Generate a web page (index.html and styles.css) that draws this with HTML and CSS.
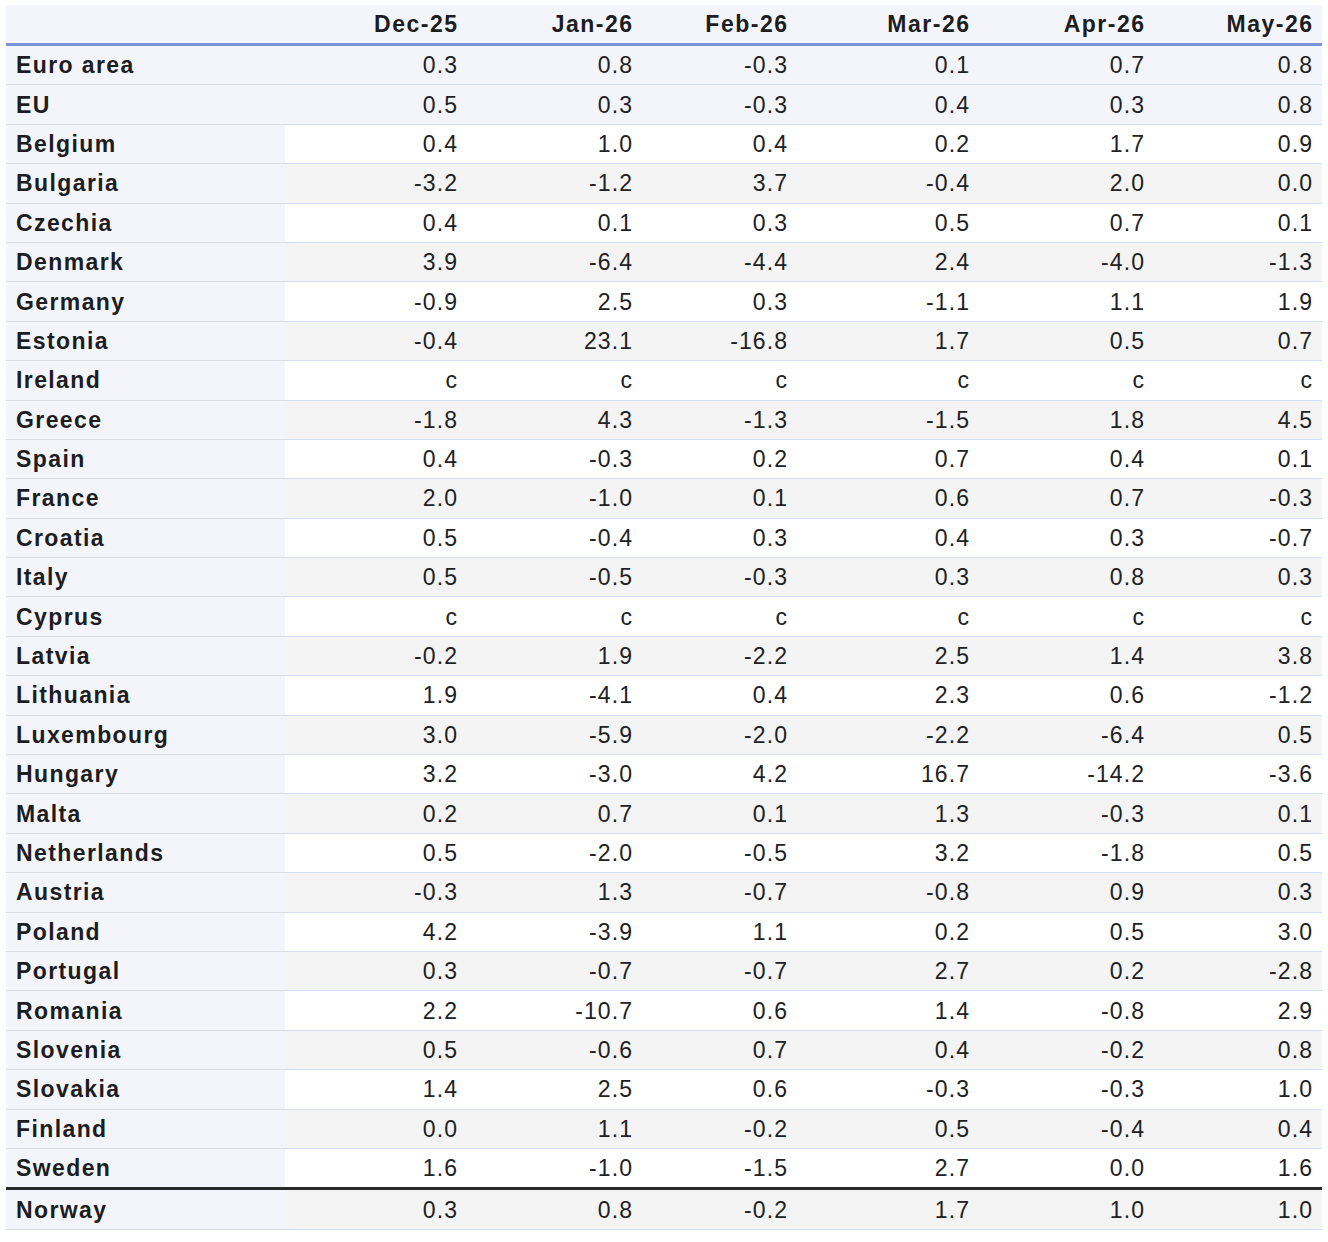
FILE: index.html
```html
<!DOCTYPE html>
<html lang="en">
<head>
<meta charset="utf-8">
<title>Monthly change by country</title>
<link rel="stylesheet" href="styles.css">
</head>
<body>
<table class="data">
  <colgroup>
    <col class="c-label">
    <col class="c-w182">
    <col class="c-w175">
    <col class="c-w155">
    <col class="c-w182">
    <col class="c-w175">
    <col class="c-w168">
  </colgroup>
  <thead>
    <tr>
      <th class="label"></th>
      <th>Dec-25</th>
      <th>Jan-26</th>
      <th>Feb-26</th>
      <th>Mar-26</th>
      <th>Apr-26</th>
      <th>May-26</th>
    </tr>
  </thead>
  <tbody class="aggregates">
    <tr><th class="label">Euro area</th><td>0.3</td><td>0.8</td><td>-0.3</td><td>0.1</td><td>0.7</td><td>0.8</td></tr>
    <tr><th class="label">EU</th><td>0.5</td><td>0.3</td><td>-0.3</td><td>0.4</td><td>0.3</td><td>0.8</td></tr>
  </tbody>
  <tbody class="members">
    <tr><th class="label">Belgium</th><td>0.4</td><td>1.0</td><td>0.4</td><td>0.2</td><td>1.7</td><td>0.9</td></tr>
    <tr><th class="label">Bulgaria</th><td>-3.2</td><td>-1.2</td><td>3.7</td><td>-0.4</td><td>2.0</td><td>0.0</td></tr>
    <tr><th class="label">Czechia</th><td>0.4</td><td>0.1</td><td>0.3</td><td>0.5</td><td>0.7</td><td>0.1</td></tr>
    <tr><th class="label">Denmark</th><td>3.9</td><td>-6.4</td><td>-4.4</td><td>2.4</td><td>-4.0</td><td>-1.3</td></tr>
    <tr><th class="label">Germany</th><td>-0.9</td><td>2.5</td><td>0.3</td><td>-1.1</td><td>1.1</td><td>1.9</td></tr>
    <tr><th class="label">Estonia</th><td>-0.4</td><td>23.1</td><td>-16.8</td><td>1.7</td><td>0.5</td><td>0.7</td></tr>
    <tr><th class="label">Ireland</th><td>c</td><td>c</td><td>c</td><td>c</td><td>c</td><td>c</td></tr>
    <tr><th class="label">Greece</th><td>-1.8</td><td>4.3</td><td>-1.3</td><td>-1.5</td><td>1.8</td><td>4.5</td></tr>
    <tr><th class="label">Spain</th><td>0.4</td><td>-0.3</td><td>0.2</td><td>0.7</td><td>0.4</td><td>0.1</td></tr>
    <tr><th class="label">France</th><td>2.0</td><td>-1.0</td><td>0.1</td><td>0.6</td><td>0.7</td><td>-0.3</td></tr>
    <tr><th class="label">Croatia</th><td>0.5</td><td>-0.4</td><td>0.3</td><td>0.4</td><td>0.3</td><td>-0.7</td></tr>
    <tr><th class="label">Italy</th><td>0.5</td><td>-0.5</td><td>-0.3</td><td>0.3</td><td>0.8</td><td>0.3</td></tr>
    <tr><th class="label">Cyprus</th><td>c</td><td>c</td><td>c</td><td>c</td><td>c</td><td>c</td></tr>
    <tr><th class="label">Latvia</th><td>-0.2</td><td>1.9</td><td>-2.2</td><td>2.5</td><td>1.4</td><td>3.8</td></tr>
    <tr><th class="label">Lithuania</th><td>1.9</td><td>-4.1</td><td>0.4</td><td>2.3</td><td>0.6</td><td>-1.2</td></tr>
    <tr><th class="label">Luxembourg</th><td>3.0</td><td>-5.9</td><td>-2.0</td><td>-2.2</td><td>-6.4</td><td>0.5</td></tr>
    <tr><th class="label">Hungary</th><td>3.2</td><td>-3.0</td><td>4.2</td><td>16.7</td><td>-14.2</td><td>-3.6</td></tr>
    <tr><th class="label">Malta</th><td>0.2</td><td>0.7</td><td>0.1</td><td>1.3</td><td>-0.3</td><td>0.1</td></tr>
    <tr><th class="label">Netherlands</th><td>0.5</td><td>-2.0</td><td>-0.5</td><td>3.2</td><td>-1.8</td><td>0.5</td></tr>
    <tr><th class="label">Austria</th><td>-0.3</td><td>1.3</td><td>-0.7</td><td>-0.8</td><td>0.9</td><td>0.3</td></tr>
    <tr><th class="label">Poland</th><td>4.2</td><td>-3.9</td><td>1.1</td><td>0.2</td><td>0.5</td><td>3.0</td></tr>
    <tr><th class="label">Portugal</th><td>0.3</td><td>-0.7</td><td>-0.7</td><td>2.7</td><td>0.2</td><td>-2.8</td></tr>
    <tr><th class="label">Romania</th><td>2.2</td><td>-10.7</td><td>0.6</td><td>1.4</td><td>-0.8</td><td>2.9</td></tr>
    <tr><th class="label">Slovenia</th><td>0.5</td><td>-0.6</td><td>0.7</td><td>0.4</td><td>-0.2</td><td>0.8</td></tr>
    <tr><th class="label">Slovakia</th><td>1.4</td><td>2.5</td><td>0.6</td><td>-0.3</td><td>-0.3</td><td>1.0</td></tr>
    <tr><th class="label">Finland</th><td>0.0</td><td>1.1</td><td>-0.2</td><td>0.5</td><td>-0.4</td><td>0.4</td></tr>
    <tr class="last"><th class="label">Sweden</th><td>1.6</td><td>-1.0</td><td>-1.5</td><td>2.7</td><td>0.0</td><td>1.6</td></tr>
  </tbody>
  <tbody class="others">
    <tr><th class="label">Norway</th><td>0.3</td><td>0.8</td><td>-0.2</td><td>1.7</td><td>1.0</td><td>1.0</td></tr>
  </tbody>
</table>
</body>
</html>
```
FILE: styles.css
```css
html, body {
  margin: 0;
  padding: 0;
  background: #ffffff;
}

body {
  padding: 5px 6px;
  font-family: "Liberation Sans", Arial, Helvetica, sans-serif;
  color: #1c1d1f;
}

.data {
  width: 1316px;
  table-layout: fixed;
  border-collapse: separate;
  border-spacing: 0;
}

.c-label { width: 279px; }
.c-w182 { width: 182px; }
.c-w175 { width: 175px; }
.c-w155 { width: 155px; }
.c-w168 { width: 168px; }

.data thead th {
  background: #f4f5fa;
  font-size: 23px;
  font-weight: bold;
  letter-spacing: 1.5px;
  line-height: 24.4px;
  padding: 6.9px 8.5px 6.7px 10px;
  text-align: right;
  border-bottom: 3px solid #7b93d9;
  white-space: nowrap;
}

.data tbody th,
.data tbody td {
  line-height: 24.4px;
  white-space: nowrap;
}

.data tbody th.label {
  font-size: 23px;
  letter-spacing: 1.4px;
  padding: 7.2px 8px 6.8px 10px;
  text-align: left;
  font-weight: bold;
  background: #f4f5fa;
  border-bottom: 1px solid #dcdde1;
}

.data tbody td {
  font-size: 23px;
  letter-spacing: 1.1px;
  padding: 7.2px 8.9px 6.8px 10px;
  text-align: right;
  font-weight: normal;
  color: #202124;
  border-bottom: 1px solid #d3def5;
}

.members tr:nth-child(odd) td { background: #ffffff; }
.members tr:nth-child(even) td { background: #f3f4f3; }

.aggregates th.label,
.aggregates td {
  background: #f4f5fa;
  border-bottom: 1px solid #7b93d9;
}

.members tr.last th.label,
.members tr.last td {
  border-bottom: 3px solid #2a2a2a;
}

.others td { background: #f3f4f3; }
```
